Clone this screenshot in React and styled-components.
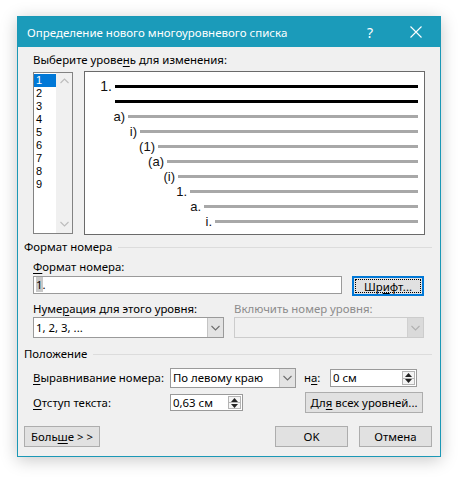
import React from 'react';
import styled, { createGlobalStyle } from 'styled-components';

const GlobalStyle = createGlobalStyle`
  html, body {
    margin: 0;
    padding: 0;
    background: #fff;
  }
  body {
    font-family: "Noto Sans", "Segoe UI", sans-serif;
    font-size: 11.4px;
    color: #000;
  }
  u {
    text-underline-offset: 2px;
  }
`;

const levels = [
  { label: '1.', x: 30, dark: true, big: true },
  { label: '', x: 30, dark: true },
  { label: 'a)', x: 43 },
  { label: 'i)', x: 55 },
  { label: '(1)', x: 73 },
  { label: '(a)', x: 82 },
  { label: '(i)', x: 93 },
  { label: '1.', x: 105 },
  { label: 'a.', x: 119 },
  { label: 'i.', x: 130 },
];

const Chevron = ({ up, color = '#bcbcbc' }) => (
  <svg width="9" height="6" viewBox="0 0 9 6">
    <path
      d={up ? 'M0.5 5 L4.5 1 L8.5 5' : 'M0.5 1 L4.5 5 L8.5 1'}
      fill="none"
      stroke={color}
      strokeWidth="1.1"
    />
  </svg>
);

const Spinner = () => (
  <SpinBox>
    <SpinHalf>
      <svg width="7" height="4" viewBox="0 0 7 4"><path d="M0 4 L3.5 0 L7 4 Z" fill="#222" /></svg>
    </SpinHalf>
    <SpinHalf>
      <svg width="7" height="4" viewBox="0 0 7 4"><path d="M0 0 L3.5 4 L7 0 Z" fill="#222" /></svg>
    </SpinHalf>
  </SpinBox>
);

const App = () => {
  return (
    <>
      <GlobalStyle />
      <Page>
        <Dialog>
          <TitleBar>
            <Title>Определение нового многоуровневого списка</Title>
            <TitleButton $w={44}>?</TitleButton>
            <TitleButton $w={48}>
              <svg width="12" height="12" viewBox="0 0 12 12">
                <path d="M0.5 0.5 L11.5 11.5 M11.5 0.5 L0.5 11.5" stroke="#fff" strokeWidth="1.1" />
              </svg>
            </TitleButton>
          </TitleBar>

          <Body>
            <Label $indent={9}>Выберите урове<u>н</u>ь для изменения:</Label>

            <LevelArea>
              <LevelList>
                <LevelItems>
                  {[1, 2, 3, 4, 5, 6, 7, 8, 9].map(n => (
                    <LevelItem key={n} $selected={n === 1}>{n}</LevelItem>
                  ))}
                </LevelItems>
                <ScrollTrack>
                  <Chevron up />
                  <Chevron />
                </ScrollTrack>
              </LevelList>

              <Preview>
                {levels.map((lv, i) => (
                  <PreviewRow key={i}>
                    <Mark $w={lv.x} $big={lv.big}>{lv.label}</Mark>
                    <Rule $dark={lv.dark} />
                  </PreviewRow>
                ))}
              </Preview>
            </LevelArea>

            <Section $mt={5}>Формат номера</Section>

            <Label $indent={9} $mt={6}><u>Ф</u>ормат номера:</Label>
            <Row $mt={2} $h={20} $align="flex-start">
              <Field $w={309} $h={18}>
                <FieldText><Selected>1</Selected>.</FieldText>
              </Field>
              <FocusButton $w={72} $h={20}><span>Шр<u>и</u>фт...</span></FocusButton>
            </Row>

            <Row $mt={6} $gap={0}>
              <Label $w={201}>Нуме<u>р</u>ация для этого уровня:</Label>
              <Label $disabled>Включить номер уровня:</Label>
            </Row>
            <Row $mt={1} $h={21}>
              <Field $w={191} $h={21}>
                <FieldText>1, 2, 3, ...</FieldText>
                <DropButton><Chevron color="#6d6d6d" /></DropButton>
              </Field>
              <Field $w={190} $h={21} $disabled>
                <FieldText />
                <DropButton $disabled><Chevron color="#b0b0b0" /></DropButton>
              </Field>
            </Row>

            <Section $mt={9}>Положение</Section>

            <Row $mt={7} $h={20} $gap={0}>
              <Label $w={137}><u>В</u>ыравнивание номера:</Label>
              <Field $w={126} $h={20}>
                <FieldText>По левому краю</FieldText>
                <DropButton><Chevron color="#6d6d6d" /></DropButton>
              </Field>
              <Label $w={26} $ml={8}>н<u>а</u>:</Label>
              <Field $w={87} $h={18}>
                <FieldText>0 см</FieldText>
                <Spinner />
              </Field>
            </Row>

            <Row $mt={4} $h={21} $gap={0}>
              <Label $w={137}><u>О</u>тступ текста:</Label>
              <Field $w={73} $h={17}>
                <FieldText>0,63 см</FieldText>
                <Spinner />
              </Field>
              <Button $w={118} $h={21} $ml={62}><span>Дл<u>я</u> всех уровней...</span></Button>
            </Row>

            <Footer>
              <Button $w={76} $h={21}><span>Боль<u>ш</u>е &gt; &gt;</span></Button>
              <FooterRight>
                <Button $w={73} $h={21}>OK</Button>
                <Button $w={73} $h={21}>Отмена</Button>
              </FooterRight>
            </Footer>
          </Body>
        </Dialog>
      </Page>
    </>
  );
};

const Page = styled.div`
  width: 462px;
  height: 479px;
  padding: 16px 0 0 17px;
  box-sizing: border-box;
  overflow: hidden;
`;

const Dialog = styled.div`
  width: 424px;
  height: 441px;
  box-sizing: border-box;
  border: 1px solid #1b98b6;
  background: #f0f0f0;
  box-shadow: 0 3px 16px rgba(0, 0, 0, 0.22);
  display: flex;
  flex-direction: column;
`;

const TitleBar = styled.div`
  height: 30px;
  flex: none;
  background: #1b9bba;
  color: #fff;
  display: flex;
  align-items: center;
`;

const Title = styled.div`
  flex: 1;
  padding-left: 9px;
  font-size: 11.5px;
  white-space: nowrap;
`;

const TitleButton = styled.div`
  width: ${p => p.$w}px;
  height: 100%;
  display: flex;
  align-items: center;
  justify-content: center;
  font-size: 14px;
`;

const Body = styled.div`
  flex: 1;
  padding: 6px 8px 0 6px;
  display: flex;
  flex-direction: column;
`;

const Label = styled.div`
  height: 14px;
  line-height: 14px;
  white-space: nowrap;
  flex: none;
  margin-top: ${p => p.$mt || 0}px;
  margin-left: ${p => p.$ml || 0}px;
  padding-left: ${p => p.$indent || 0}px;
  width: ${p => (p.$w ? `${p.$w}px` : 'auto')};
  color: ${p => (p.$disabled ? '#8c8c8c' : '#000')};
`;

const LevelArea = styled.div`
  margin-top: 4px;
  height: 164px;
  padding-left: 9px;
  display: flex;
  align-items: flex-start;
  gap: 11px;
`;

const LevelList = styled.div`
  width: 40px;
  height: 162px;
  margin-top: 1px;
  box-sizing: border-box;
  border: 1px solid #828282;
  background: #fff;
  display: flex;
`;

const LevelItems = styled.div`
  width: 22px;
  padding-top: 1px;
`;

const LevelItem = styled.div`
  height: 13px;
  line-height: 13px;
  font-family: "Liberation Sans", Arial, sans-serif;
  font-size: 11px;
  padding-left: 2px;
  background: ${p => (p.$selected ? '#0078d7' : 'transparent')};
  color: ${p => (p.$selected ? '#fff' : '#000')};
`;

const ScrollTrack = styled.div`
  flex: 1;
  background: #f0f0f0;
  display: flex;
  flex-direction: column;
  align-items: center;
  justify-content: space-between;
  padding: 5px 0 6px;
`;

const Preview = styled.div`
  width: 341px;
  height: 164px;
  box-sizing: border-box;
  border: 1px solid #6a6a6a;
  background: #fff;
  padding: 7px 6px 0 0;
  font-family: "Liberation Sans", Arial, sans-serif;
`;

const PreviewRow = styled.div`
  height: 15px;
  display: flex;
  align-items: center;
`;

const Mark = styled.div`
  width: ${p => p.$w}px;
  flex: none;
  box-sizing: border-box;
  padding-right: 3px;
  text-align: right;
  font-size: ${p => (p.$big ? 14 : 13)}px;
  line-height: 15px;
  color: #111;
`;

const Rule = styled.div`
  flex: 1;
  height: 3px;
  background: ${p => (p.$dark ? '#000' : '#a8a8a8')};
`;

const Section = styled.div`
  margin-top: ${p => p.$mt}px;
  height: 14px;
  line-height: 14px;
  display: flex;
  align-items: center;

  &::after {
    content: '';
    flex: 1;
    height: 1px;
    margin-left: 6px;
    background: #dcdcdc;
  }
`;

const Row = styled.div`
  margin-top: ${p => p.$mt || 0}px;
  height: ${p => (p.$h ? `${p.$h}px` : 'auto')};
  padding-left: 9px;
  display: flex;
  align-items: ${p => p.$align || 'center'};
  gap: ${p => (p.$gap ?? 10)}px;
`;

const Field = styled.div`
  width: ${p => p.$w}px;
  height: ${p => p.$h}px;
  flex: none;
  box-sizing: border-box;
  border: 1px solid ${p => (p.$disabled ? '#cccccc' : '#9a9a9a')};
  background: ${p => (p.$disabled ? '#f0f0f0' : '#fff')};
  display: flex;
  align-items: center;
  padding-left: ${p => (p.$disabled ? 0 : 2)}px;
`;

const FieldText = styled.div`
  flex: 1;
  line-height: 16px;
  white-space: nowrap;
  overflow: hidden;
`;

const Selected = styled.span`
  background: #c8c8c8;
`;

const DropButton = styled.div`
  width: 16px;
  height: 100%;
  box-sizing: border-box;
  border-left: 1px solid ${p => (p.$disabled ? '#d0d0d0' : '#c4c4c4')};
  background: ${p => (p.$disabled ? '#dadada' : '#e3e3e3')};
  display: flex;
  align-items: center;
  justify-content: center;
`;

const SpinBox = styled.div`
  width: 13px;
  height: 100%;
  margin-right: 1px;
  box-sizing: border-box;
  display: flex;
  flex-direction: column;
  padding: 1px 0;
`;

const SpinHalf = styled.div`
  flex: 1;
  border: 1px solid #b4b4b4;
  background: #f4f4f4;
  display: flex;
  align-items: center;
  justify-content: center;

  & + & {
    border-top: none;
  }
`;

const Button = styled.div`
  width: ${p => p.$w}px;
  height: ${p => p.$h}px;
  margin-left: ${p => p.$ml || 0}px;
  flex: none;
  box-sizing: border-box;
  border: 1px solid #adadad;
  background: #e1e1e1;
  display: flex;
  align-items: center;
  justify-content: center;
  white-space: nowrap;
`;

const FocusButton = styled(Button)`
  position: relative;
  border: 1px solid #0078d7;
  box-shadow: inset 0 0 0 1px #0078d7;

  &::after {
    content: '';
    position: absolute;
    inset: 2px;
    border: 1px dotted #000;
  }
`;

const Footer = styled.div`
  margin-top: 13px;
  display: flex;
  justify-content: space-between;
`;

const FooterRight = styled.div`
  display: flex;
  gap: 11px;
`;

export default App;
